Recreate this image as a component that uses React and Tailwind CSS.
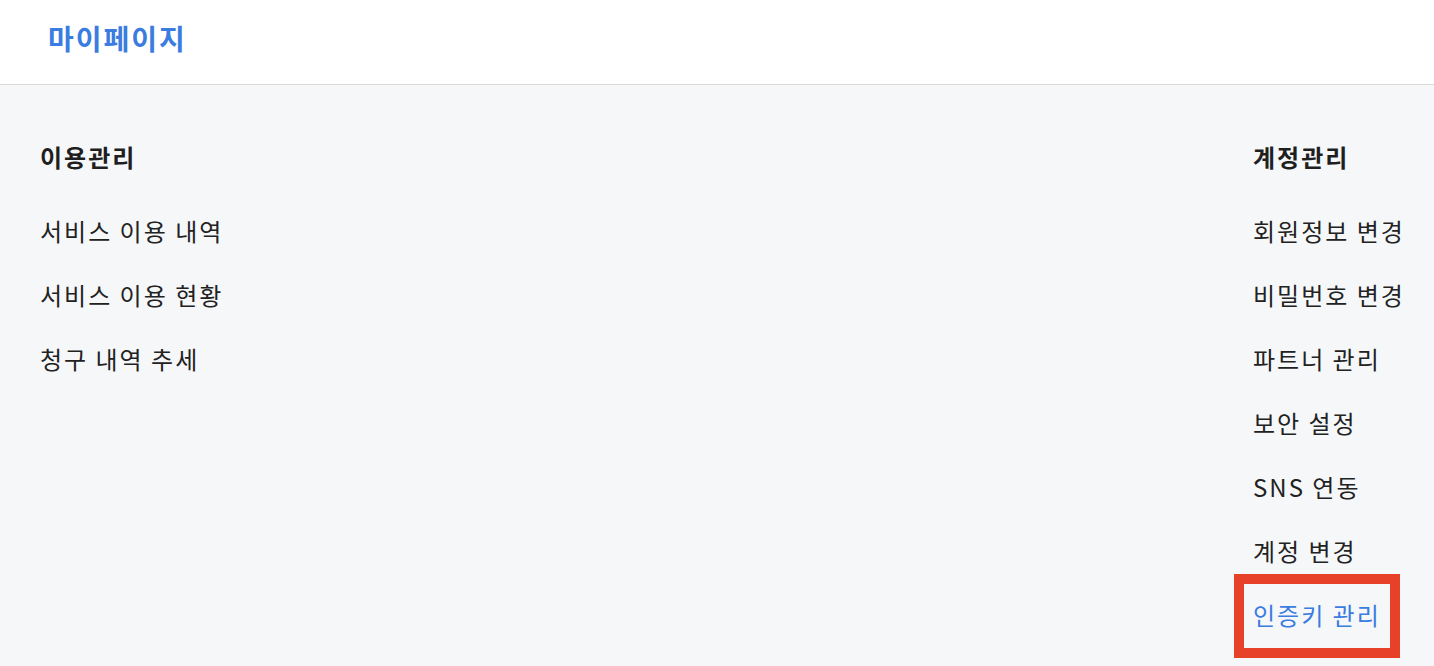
import React from "react";

const usageMenu = ["서비스 이용 내역", "서비스 이용 현황", "청구 내역 추세"];

const accountMenu = [
  { label: "회원정보 변경" },
  { label: "비밀번호 변경" },
  { label: "파트너 관리" },
  { label: "보안 설정" },
  { label: "SNS 연동" },
  { label: "계정 변경" },
  { label: "인증키 관리", active: true },
];

const MenuItem = ({ label, active }) => (
  <li className="relative flex h-16 items-center">
    {active && (
      <span className="pointer-events-none absolute left-[-19px] top-[-9px] h-[84px] w-[166px] border-[10px] border-[#e8412a]" />
    )}
    <span className={active ? "text-[#3b7ce0]" : "text-[#222222]"}>{label}</span>
  </li>
);

const App = () => {
  return (
    <div
      className="min-h-screen bg-[#f6f7f9] tracking-[2px]"
      style={{ fontFamily: "'Noto Sans CJK KR', 'Noto Sans', sans-serif" }}
    >
      {/* Header */}
      <header className="flex h-[85px] items-center border-b border-[#dadada] bg-white px-12 pb-2">
        <h1 className="text-[28px] font-bold leading-none text-[#3b7ce0]">마이페이지</h1>
      </header>

      {/* Menu columns */}
      <div className="flex justify-between pl-10 pt-14 text-[24px]">
        <section>
          <h2 className="mb-[26px] h-8 font-bold leading-8 text-[#1f1f1f]">이용관리</h2>
          <ul>
            {usageMenu.map((label) => (
              <MenuItem key={label} label={label} />
            ))}
          </ul>
        </section>

        <section className="w-[181px]">
          <h2 className="mb-[26px] h-8 font-bold leading-8 text-[#1f1f1f]">계정관리</h2>
          <ul>
            {accountMenu.map((item) => (
              <MenuItem key={item.label} {...item} />
            ))}
          </ul>
        </section>
      </div>
    </div>
  );
};

export default App;
